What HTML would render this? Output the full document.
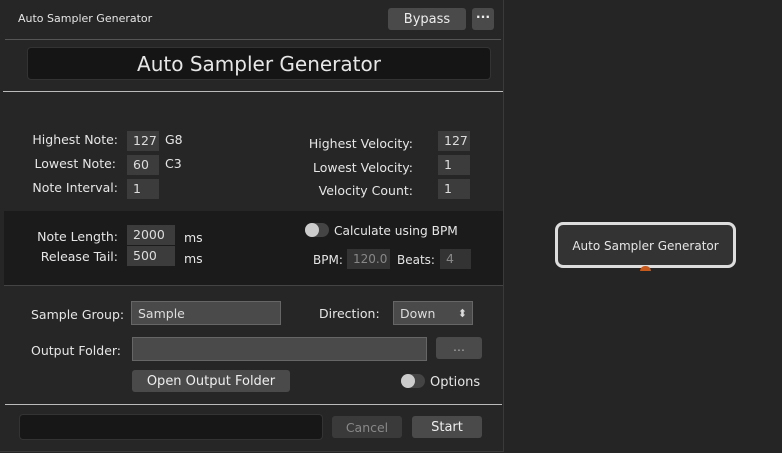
<!DOCTYPE html><html><head><style>
body{margin:0;width:782px;height:453px;background:#252525;font-family:"DejaVu Sans","Liberation Sans",sans-serif;color:#e6e6e6;position:relative;overflow:hidden}
.a{position:absolute}
.f{position:absolute;background:#3c3c3c;font-size:12.5px;line-height:20px;padding-left:6px;box-sizing:border-box;color:#ddd}
.l{position:absolute;font-size:12.5px;text-align:right;white-space:nowrap}
.btn{position:absolute;background:#4a4a4a;border-radius:3px;font-size:12.5px;text-align:center;color:#eee}
</style></head><body>
<div class="a" style="left:0;top:0;width:503px;height:451px;border-right:1px solid #3a3a3a;border-bottom:1px solid #3a3a3a;background:#262626"></div>
<div class="a" style="left:18px;top:12px;font-size:11px">Auto Sampler Generator</div>
<div class="btn" style="left:388px;top:8px;width:78px;height:22px;line-height:24px;font-size:13px">Bypass</div>
<div class="btn" style="left:472px;top:8px;width:22px;height:22px;line-height:18px;font-weight:bold">···</div>
<div class="a" style="left:5px;top:39px;width:496px;height:1px;background:#555"></div>
<div class="a" style="left:27px;top:47px;width:464px;height:33px;background:#151515;border:1px solid #333;border-radius:4px;box-sizing:border-box;text-align:center;line-height:33px;font-size:20px">Auto Sampler Generator</div>
<div class="a" style="left:3px;top:91px;width:500px;height:1px;background:#bbb"></div>
<div class="l" style="right:664px;top:132px">Highest Note:</div>
<div class="f" style="left:127px;top:131px;width:32px">127</div><div class="l" style="left:165px;top:132px">G8</div>
<div class="l" style="right:666px;top:156px">Lowest Note:</div>
<div class="f" style="left:127px;top:155px;width:32px">60</div><div class="l" style="left:165px;top:156px">C3</div>
<div class="l" style="right:664px;top:180px">Note Interval:</div>
<div class="f" style="left:127px;top:179px;width:32px">1</div>
<div class="l" style="right:369px;top:136px">Highest Velocity:</div>
<div class="f" style="left:438px;top:131px;width:32px">127</div>
<div class="l" style="right:369px;top:160px">Lowest Velocity:</div>
<div class="f" style="left:438px;top:155px;width:32px">1</div>
<div class="l" style="right:369px;top:183px">Velocity Count:</div>
<div class="f" style="left:438px;top:179px;width:32px">1</div>
<div class="a" style="left:4px;top:211px;width:499px;height:74px;background:#1b1b1b;border-bottom:1px solid #444"></div>
<div class="l" style="right:664px;top:229px">Note Length:</div>
<div class="f" style="left:127px;top:225px;width:48px">2000</div><div class="l" style="left:184px;top:230px">ms</div>
<div class="l" style="right:664px;top:249px">Release Tail:</div>
<div class="f" style="left:127px;top:246px;width:48px">500</div><div class="l" style="left:184px;top:251px">ms</div>
<div class="a" style="left:305px;top:223px;width:24px;height:14px;border-radius:7px;background:#444"></div>
<div class="a" style="left:305px;top:223px;width:14px;height:14px;border-radius:7px;background:#ccc"></div>
<div class="l" style="left:334px;top:224px;font-size:12.2px">Calculate using BPM</div>
<div class="l" style="left:313px;top:253px;font-size:12px">BPM:</div>
<div class="f" style="left:347px;top:249px;width:43px;color:#888;background:#333;font-size:12px">120.0</div>
<div class="l" style="left:397px;top:253px;font-size:12px">Beats:</div>
<div class="f" style="left:440px;top:249px;width:31px;color:#888;background:#333">4</div>
<div class="l" style="left:31px;top:307px">Sample Group:</div>
<div class="f" style="left:131px;top:301px;width:150px;height:24px;line-height:24px;background:#4a4a4a;border:1px solid #666">Sample</div>
<div class="l" style="left:319px;top:306px">Direction:</div>
<div class="f" style="left:393px;top:301px;width:80px;height:24px;line-height:24px;background:#4a4a4a;border:1px solid #666">Down<span style="position:absolute;right:5px;font-size:11px;top:0">⬍</span></div>
<div class="l" style="left:31px;top:343px">Output Folder:</div>
<div class="a" style="left:132px;top:337px;width:295px;height:24px;background:#4a4a4a;border:1px solid #666;box-sizing:border-box"></div>
<div class="btn" style="left:436px;top:337px;width:46px;height:22px;line-height:20px;color:#aaa">...</div>
<div class="btn" style="left:132px;top:370px;width:158px;height:22px;line-height:24px;font-size:13px">Open Output Folder</div>
<div class="a" style="left:401px;top:374px;width:24px;height:14px;border-radius:7px;background:#444"></div>
<div class="a" style="left:401px;top:374px;width:14px;height:14px;border-radius:7px;background:#ccc"></div>
<div class="l" style="left:430px;top:375px;font-size:13px">Options</div>
<div class="a" style="left:5px;top:404px;width:497px;height:1px;background:#bbb"></div>
<div class="a" style="left:19px;top:414px;width:304px;height:26px;background:#171717;border:1px solid #333;border-radius:4px;box-sizing:border-box"></div>
<div class="btn" style="left:332px;top:416px;width:70px;height:22px;line-height:24px;background:#3a3a3a;color:#888">Cancel</div>
<div class="btn" style="left:412px;top:416px;width:70px;height:22px;line-height:24px;font-size:13px">Start</div>
<div class="a" style="left:555px;top:222px;width:181px;height:46px;border:3px solid #ddd;border-radius:8px;background:#333;box-sizing:border-box;text-align:center;line-height:43px;font-size:12px">Auto Sampler Generator</div>
<div class="a" style="left:640px;top:266px;width:11px;height:5px;border-radius:6px 6px 0 0;background:#c85a1e"></div>
</body></html>
